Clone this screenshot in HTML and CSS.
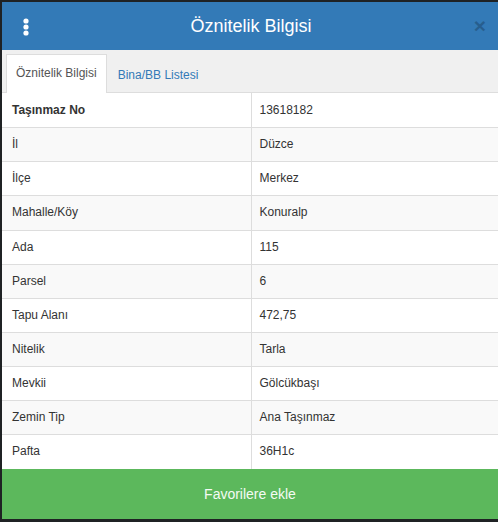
FILE: index.html
```html
<!DOCTYPE html>
<html lang="tr">
<head>
<meta charset="utf-8">
<title>Öznitelik Bilgisi</title>
<link rel="stylesheet" href="styles.css">
</head>
<body>
<div class="panel">
  <div class="header">
    <span class="menu">
      <svg width="8" height="18" viewBox="0 0 8 18"><circle cx="4" cy="3" r="2.6" fill="#fff"/><circle cx="4" cy="9" r="2.6" fill="#fff"/><circle cx="4" cy="15" r="2.6" fill="#fff"/></svg>
    </span>
    <span class="title">Öznitelik Bilgisi</span>
    <span class="close">×</span>
  </div>
  <div class="tabs">
    <span class="tab active">Öznitelik Bilgisi</span>
    <span class="tab">Bina/BB Listesi</span>
  </div>
  <table class="attr">
    <colgroup><col class="c1"><col></colgroup>
    <tr class="head"><th>Taşınmaz No</th><td>13618182</td></tr>
    <tr class="alt"><td>İl</td><td>Düzce</td></tr>
    <tr><td>İlçe</td><td>Merkez</td></tr>
    <tr class="alt"><td>Mahalle/Köy</td><td>Konuralp</td></tr>
    <tr><td>Ada</td><td>115</td></tr>
    <tr class="alt"><td>Parsel</td><td>6</td></tr>
    <tr><td>Tapu Alanı</td><td>472,75</td></tr>
    <tr class="alt"><td>Nitelik</td><td>Tarla</td></tr>
    <tr><td>Mevkii</td><td>Gölcükbaşı</td></tr>
    <tr class="alt"><td>Zemin Tip</td><td>Ana Taşınmaz</td></tr>
    <tr><td>Pafta</td><td>36H1c</td></tr>
  </table>
  <div class="fav">Favorilere ekle</div>
</div>
</body>
</html>
```
FILE: styles.css
```css
html, body {
  margin: 0;
  padding: 0;
}
body {
  background: #1f2224;
  font-family: "Liberation Sans", Arial, sans-serif;
  color: #333;
  width: 498px;
  height: 522px;
  overflow: hidden;
}
.panel {
  margin: 2px 0 0 2px;
  width: 496px;
  background: #fff;
  display: flex;
  flex-direction: column;
}
.header {
  height: 48px;
  background: #337ab7;
  display: flex;
  align-items: center;
}
.menu {
  width: 48px;
  display: flex;
  justify-content: center;
  padding-top: 1px;
}
.title {
  flex: 1;
  text-align: center;
  color: #fff;
  font-size: 18px;
  padding-left: 2px;
}
.close {
  width: 48px;
  text-align: center;
  font-size: 21px;
  font-weight: bold;
  color: #000;
  opacity: 0.22;
  padding-left: 12px;
  box-sizing: border-box;
}
.tabs {
  height: 43px;
  background: #f0f0f0;
  border-bottom: 1px solid #ddd;
  box-sizing: border-box;
  display: flex;
  align-items: flex-end;
  padding-left: 4px;
  gap: 1px;
}
.tab {
  font-size: 12px;
  height: 38px;
  line-height: 38px;
  padding: 0 9px;
  color: #337ab7;
  box-sizing: border-box;
  border: 1px solid transparent;
  border-bottom: none;
  margin-bottom: -1px;
}
.tab.active {
  background: #fff;
  color: #555;
  border-color: #ddd;
  height: 39px;
  line-height: 37px;
}
.attr {
  width: 100%;
  border-collapse: collapse;
  table-layout: fixed;
  font-size: 12px;
  line-height: 1.42857;
}
.attr col.c1 {
  width: 249px;
}
.attr th, .attr td {
  padding: 8px;
  text-align: left;
  border-top: 1px solid #ddd;
}
.attr tr.head th, .attr tr.head td {
  border-top: none;
  padding-top: 9px;
}
.attr th {
  font-weight: bold;
}
.attr tr > :first-child {
  padding-left: 10px;
  border-right: 1px solid #ddd;
}
.attr tr.alt {
  background: #f9f9f9;
}
.fav {
  height: 50px;
  background: #5cb85c;
  color: #f4fbf4;
  font-size: 14px;
  display: flex;
  align-items: center;
  justify-content: center;
}
```
